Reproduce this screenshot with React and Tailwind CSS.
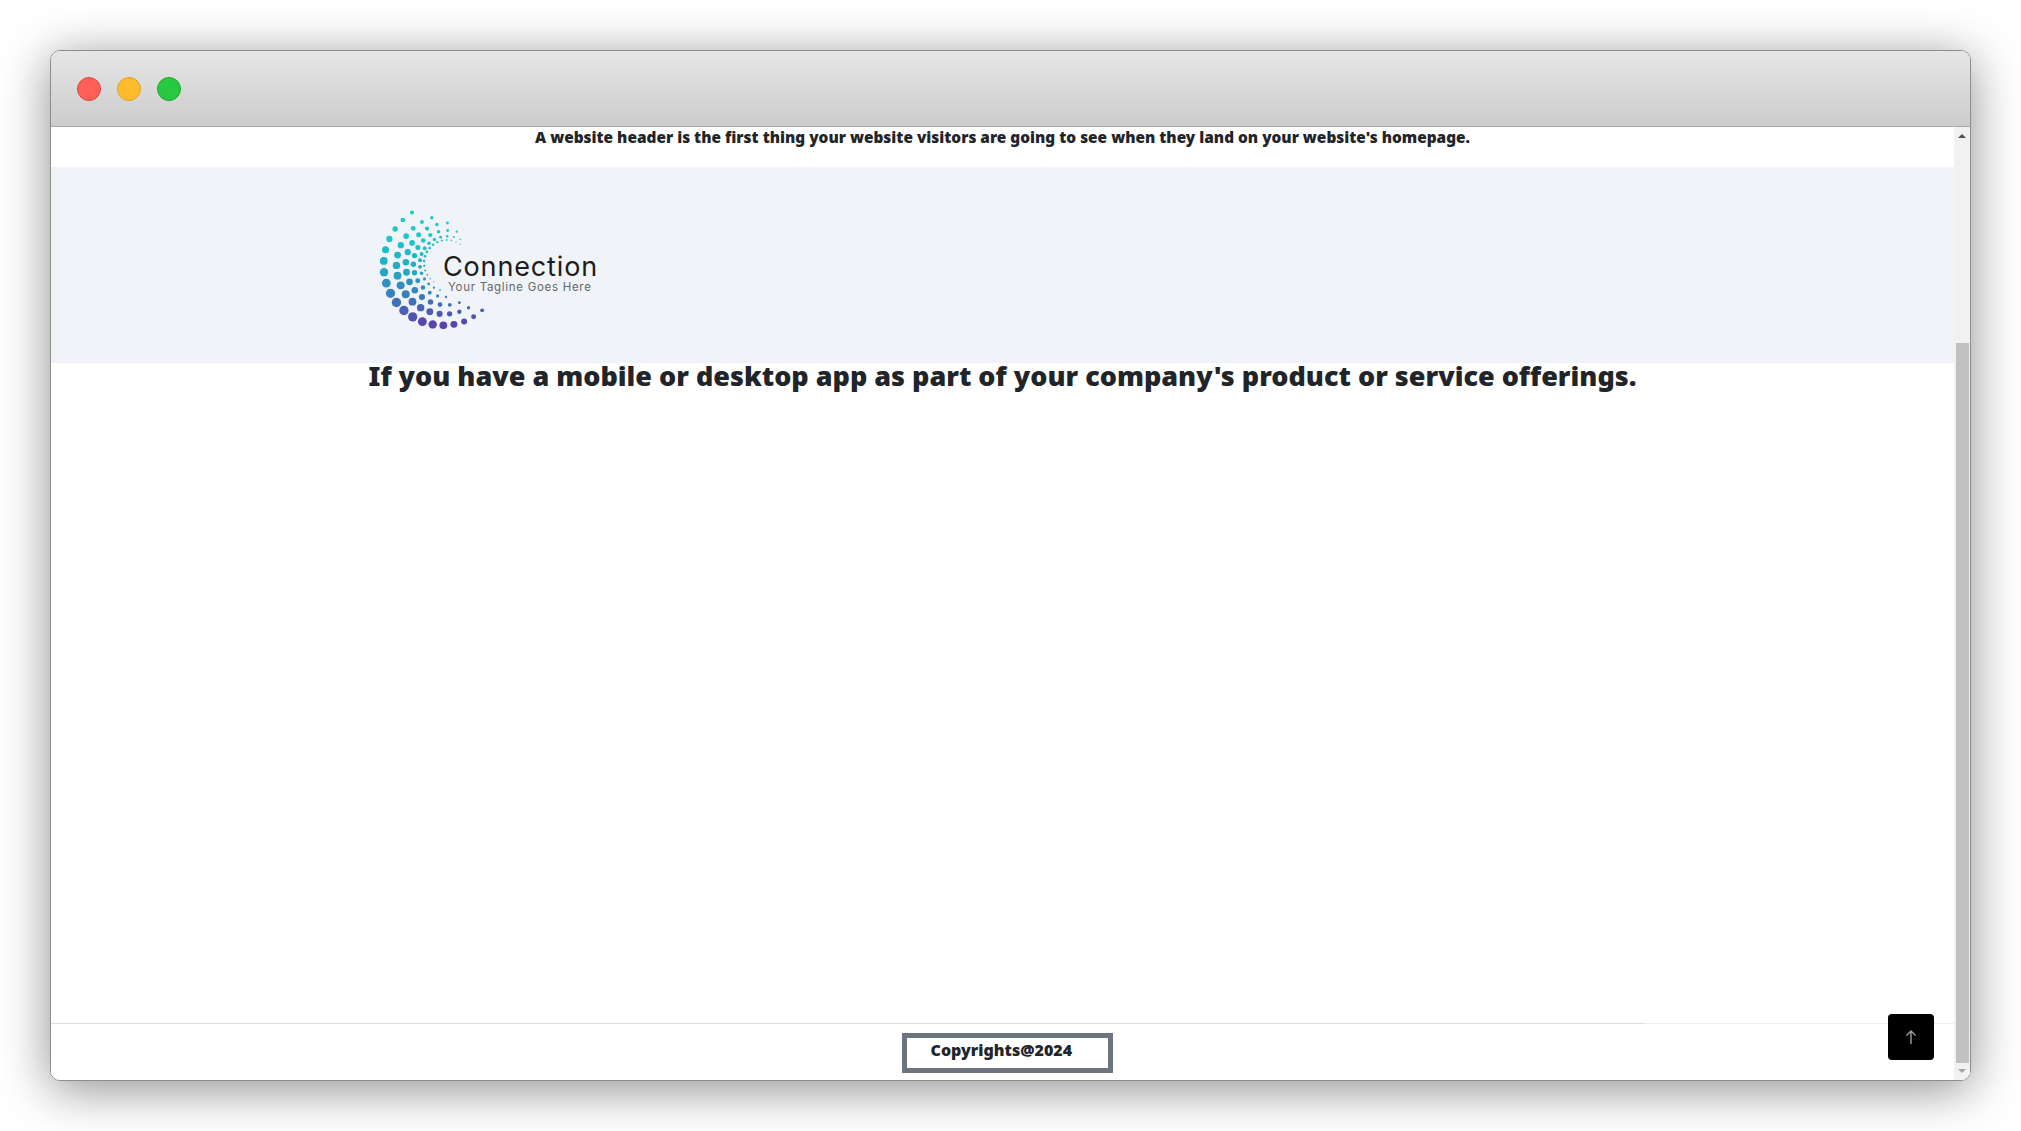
import React from 'react';

// swirl of dots for the logo, in a 280x160 box
const RINGS = [
  { cx: 93, cy: 78, r: 57, grow: 7, from: 240, to: 48, step: 10.4, size: 4.7 },
  { cx: 94, cy: 77, r: 47, grow: 4, from: 255, to: 60, step: 12.5, size: 4 },
  { cx: 95, cy: 76, r: 39, grow: 4, from: 272, to: 70, step: 14, size: 3.4 },
  { cx: 95, cy: 75, r: 32, grow: 3, from: 288, to: 90, step: 15, size: 2.7 },
  { cx: 96, cy: 74, r: 27, grow: 1, from: 298, to: 105, step: 14, size: 2 },
  { cx: 96, cy: 73, r: 23, grow: 0, from: 305, to: 125, step: 12, size: 1.3 },
];

const mix = (t) => {
  const stops = [
    [25, 205, 200],
    [25, 200, 200],
    [35, 170, 195],
    [60, 120, 185],
    [90, 60, 175],
  ];
  const p = Math.min(Math.max(t, 0), 0.999) * (stops.length - 1);
  const i = Math.floor(p);
  const f = p - i;
  const c = stops[i].map((v, n) => Math.round(v + (stops[i + 1][n] - v) * f));
  return `rgb(${c[0]},${c[1]},${c[2]})`;
};

const Dots = () => {
  const dots = [];
  RINGS.forEach((ring, k) => {
    const count = Math.round((ring.from - ring.to) / ring.step);
    for (let j = 0; j <= count; j++) {
      const deg = ring.from - (j * (ring.from - ring.to)) / count;
      const a = (deg * Math.PI) / 180;
      const t = j / count;
      const r = ring.r + ring.grow * (1 - t) * (1 - t);
      const x = ring.cx + r * Math.cos(a);
      const y = ring.cy + r * Math.sin(a);
      const swell = 0.42 + 0.58 * Math.sin(Math.PI * Math.pow(t, 1.1));
      dots.push(
        <circle key={`${k}-${j}`} cx={x} cy={y} r={ring.size * swell} fill={mix((y - 20) / 118)} />
      );
    }
  });
  return (
    <svg className="absolute inset-0" width="280" height="160" viewBox="0 0 280 160">
      {dots}
    </svg>
  );
};

const Logo = () => (
  <div className="relative w-[280px] h-[160px] ml-[300px] mt-[23px]">
    <Dots />
    <div className="absolute left-[92px] top-[58px] w-[160px] font-['Inter',sans-serif]">
      <p className="text-[27px] leading-[38px] text-[#1c1c1c] tracking-[0.85px]">Connection</p>
      <p className="text-[11.5px] leading-[12px] text-[#666] tracking-[0.7px] ml-[5px] -mt-[5px] whitespace-nowrap">Your Tagline Goes Here</p>
    </div>
  </div>
);

const Scrollbar = () => (
  <div className="w-4 bg-[#f1f1f1] flex flex-col items-center shrink-0">
    <div className="h-[216px] w-full flex justify-center pt-[7px]">
      <div className="w-0 h-0 border-x-[4px] border-x-transparent border-b-[4px] border-b-[#505050]"></div>
    </div>
    <div className="flex-1 w-[13px] bg-[#c1c1c1]"></div>
    <div className="h-[17px] w-full flex justify-center pt-[6px]">
      <div className="w-0 h-0 border-x-[4px] border-x-transparent border-t-[4px] border-t-[#a3a3a3]"></div>
    </div>
  </div>
);

export default function App() {
  return (
    <div className="h-[1131px] p-[50px] bg-white overflow-hidden font-['Noto_Sans',sans-serif]">
      <div className="h-full flex flex-col rounded-[10px] overflow-hidden border border-[#8d8d8d] shadow-[0_8px_50px_rgba(0,0,0,0.45)]">
        <div className="h-[76px] shrink-0 flex items-center gap-4 pl-[26px] bg-gradient-to-b from-[#e6e6e6] to-[#cccccc] border-b border-[#a9a9a9]">
          <span className="w-6 h-6 rounded-full bg-[#ff5f57] border border-[#e0443e]"></span>
          <span className="w-6 h-6 rounded-full bg-[#ffbd2e] border border-[#dea123]"></span>
          <span className="w-6 h-6 rounded-full bg-[#28c940] border border-[#1aab29]"></span>
        </div>

        <div className="flex-1 flex min-h-0 bg-white">
          <div className="flex-1 flex flex-col relative text-[#212529]">
            <p className="h-[40px] text-center text-[15.4px] leading-[22px] font-black">
              A website header is the first thing your website visitors are going to see when they land on your website's homepage.
            </p>
            <div className="h-[196px] bg-[#f0f3f8] flex">
              <Logo />
            </div>
            <h1 className="text-center text-[27px] leading-[26px] font-black">
              If you have a mobile or desktop app as part of your company's product or service offerings.
            </h1>

            <div className="flex-1"></div>

            <div className="h-[57px] flex flex-col">
              <div className="flex h-px">
                <div className="w-[1595px] bg-[#dedede]"></div>
                <div className="flex-1 bg-[#eeeeee]"></div>
              </div>
              <div className="pt-[9px] flex justify-center">
                <div className="w-[211px] h-[40px] ml-[9px] border-[5px] border-[#6c757d] pl-[24px] text-[16px] leading-[24px] font-black">
                  Copyrights@2024
                </div>
              </div>
            </div>

            <button className="absolute right-[20px] bottom-[20px] w-[46px] h-[46px] rounded-[4px] bg-black flex items-center justify-center">
              <svg width="14" height="16" viewBox="0 0 14 16" fill="none" stroke="#a0a0a0" strokeWidth="1.4">
                <path d="M7 15V2M2.5 6.5 7 2l4.5 4.5" />
              </svg>
            </button>
          </div>
          <Scrollbar />
        </div>
      </div>
    </div>
  );
}
